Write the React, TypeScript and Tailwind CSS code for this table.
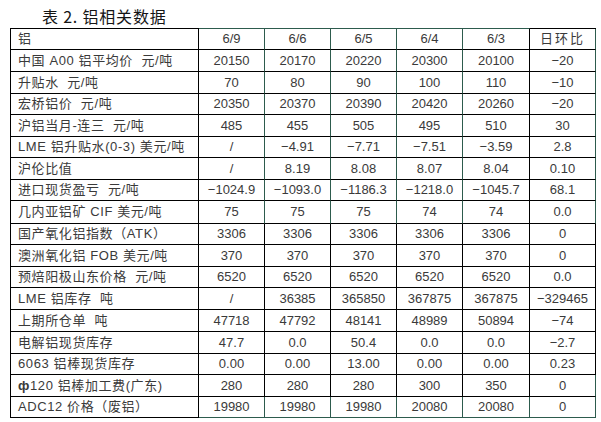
const rows: { label: React.ReactNode; vals: string[]; h: string }[] = [
  { label: "铝", vals: ["6/9", "6/6", "6/5", "6/4", "6/3", "日环比"], h: "h-[21px]" },
  { label: "中国 A00 铝平均价  元/吨", vals: ["20150", "20170", "20220", "20300", "20100", "−20"], h: "h-[22px]" },
  { label: "升贴水  元/吨", vals: ["70", "80", "90", "100", "110", "−10"], h: "h-[22px]" },
  { label: "宏桥铝价  元/吨", vals: ["20350", "20370", "20390", "20420", "20260", "−20"], h: "h-[21px]" },
  { label: "沪铝当月-连三  元/吨", vals: ["485", "455", "505", "495", "510", "30"], h: "h-[22px]" },
  { label: "LME 铝升贴水(0-3) 美元/吨", vals: ["/", "−4.91", "−7.71", "−7.51", "−3.59", "2.8"], h: "h-[21px]" },
  { label: "沪伦比值", vals: ["/", "8.19", "8.08", "8.07", "8.04", "0.10"], h: "h-[22px]" },
  { label: "进口现货盈亏  元/吨", vals: ["−1024.9", "−1093.0", "−1186.3", "−1218.0", "−1045.7", "68.1"], h: "h-[21px]" },
  { label: "几内亚铝矿 CIF 美元/吨", vals: ["75", "75", "75", "74", "74", "0.0"], h: "h-[23px]" },
  { label: "国产氧化铝指数（ATK）", vals: ["3306", "3306", "3306", "3306", "3306", "0"], h: "h-[21px]" },
  { label: "澳洲氧化铝 FOB 美元/吨", vals: ["370", "370", "370", "370", "370", "0"], h: "h-[22px]" },
  { label: "预焙阳极山东价格  元/吨", vals: ["6520", "6520", "6520", "6520", "6520", "0.0"], h: "h-[21px]" },
  { label: "LME 铝库存  吨", vals: ["/", "36385", "365850", "367875", "367875", "−329465"], h: "h-[22px]" },
  { label: "上期所仓单  吨", vals: ["47718", "47792", "48141", "48989", "50894", "−74"], h: "h-[22px]" },
  { label: "电解铝现货库存", vals: ["47.7", "0.0", "50.4", "0.0", "0.0", "−2.7"], h: "h-[22px]" },
  { label: "6063 铝棒现货库存", vals: ["0.00", "0.00", "13.00", "0.00", "0.00", "0.23"], h: "h-[21px]" },
  {
    label: (
      <>
        <span className="font-bold">ф</span>120 铝棒加工费(广东)
      </>
    ),
    vals: ["280", "280", "280", "300", "350", "0"],
    h: "h-[22px]",
  },
  { label: "ADC12 价格（废铝）", vals: ["19980", "19980", "19980", "20080", "20080", "0"], h: "h-[21px]" },
];

export default function App() {
  return (
    <div className="w-[601px] h-[422px] bg-white overflow-hidden text-[#3a3a3a]">
      {/* Title */}
      <div className="h-[28px] pl-[42px] pt-[6px] text-[16px] leading-[20px] font-normal text-[#151515] tracking-[0.8px] [font-family:'Noto_Sans_CJK_SC',serif]">
        表 2. 铝相关数据
      </div>

      {/* Table */}
      <div className="ml-[10px] w-[586px] border-l border-t border-black text-[13px] [font-family:'Liberation_Sans','Noto_Sans_CJK_SC',sans-serif]">
        {rows.map((r, i) => {
          const last = i === rows.length - 1;
          const upper = i <= 8;
          return (
            <div key={i} className={`grid grid-cols-[188px_66px_66px_66px_66px_67px_66px] ${r.h}`}>
              <div className="flex items-center pl-[7px] border-r border-b border-black tracking-[0.6px] whitespace-pre">
                {r.label}
              </div>
              {r.vals.map((v, j) => {
                const isLastCol = j === 5;
                const rightTeal = (upper && j !== 4) || last || (i === 16 && isLastCol);
                return (
                  <div
                    key={j}
                    className={`flex items-center justify-center border-r border-b ${rightTeal ? "border-r-[#2d5b4d]" : "border-r-black"} ${last ? "border-b-[#2d5b4d]" : "border-b-black"} ${i === 0 && !isLastCol ? "border-t border-t-[#2d5b4d] -mt-px" : ""} ${isLastCol && i === 0 ? "tracking-[2px]" : ""}`}
                  >
                    {v}
                  </div>
                );
              })}
            </div>
          );
        })}
      </div>
    </div>
  );
}
